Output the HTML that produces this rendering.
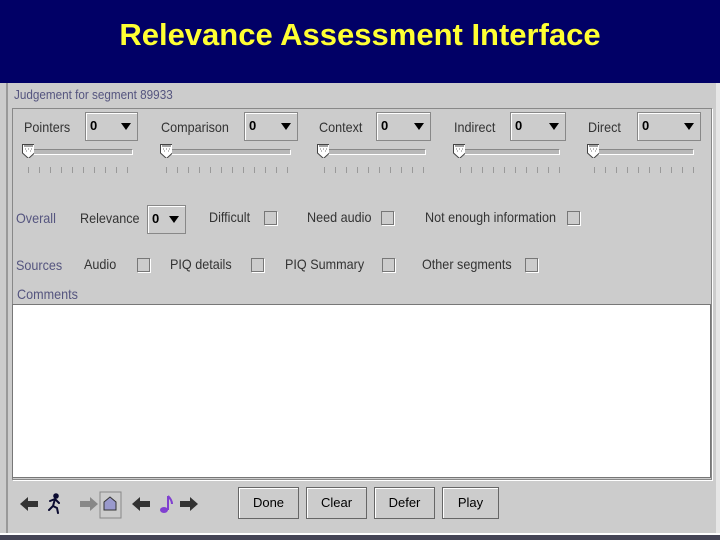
<!DOCTYPE html><html><head><style>
body{margin:0;width:720px;height:540px;background:#cccccc;position:relative;overflow:hidden;font-family:"Liberation Sans",sans-serif}
.a{position:absolute}
.hd{left:0;top:0;width:720px;height:83px;background:#010066}
.t{left:0;width:720px;top:17px;text-align:center;color:#ffff33;font-weight:bold;font-size:31px}
.l{color:#55557f;font-size:14px;transform:scaleX(.9);transform-origin:left}
.lk{color:#333;font-size:14px;transform:scaleX(.9);transform-origin:left}
.dd{height:27px;border:1px solid #888;box-shadow:inset 1px 1px #fff;background:#ccc;font-size:13px;font-weight:bold;color:#000}
.dd span{position:absolute;left:4px;top:5px}
.dd i{position:absolute;right:6px;top:10px;border-left:5px solid transparent;border-right:5px solid transparent;border-top:7px solid #000}
.tr{height:4px;background:#b8b8b8;border:1px solid #888;border-right-color:#fff;border-bottom-color:#fff}
.th{width:12px;height:14px}
.tk{height:6px;background:repeating-linear-gradient(90deg,#999 0 1px,transparent 1px 11px)}
.cb{width:11px;height:12px;border:1px solid #777;box-shadow:1px 1px #fff}
.bt{height:30px;border:1px solid #666;box-shadow:inset 1px 1px #fff;background:#ccc;font-size:13px;color:#000;text-align:center;line-height:30px}
</style></head><body>
<svg width="0" height="0" style="position:absolute"><defs><g id="th"><path d="M0.5 0.5 H12.5 V9 L6.5 14.5 L0.5 9 Z" fill="#fff" stroke="#444"/><path d="M2 2 H11" stroke="#444"/><path d="M3 5h1M6 5h1M9 5h1M4 7h1M8 7h1" stroke="#777"/></g></defs></svg>
<div class="a hd"></div><div class="a t">Relevance Assessment Interface</div>
<div class="a" style="left:6px;top:83px;width:2px;height:450px;background:#999"></div>
<div class="a" style="left:716px;top:83px;width:4px;height:457px;background:#e6e6e6"></div>
<div class="a" style="left:0;top:533px;width:720px;height:2px;background:#fff"></div>
<div class="a" style="left:0;top:535px;width:720px;height:5px;background:#445"></div>
<div class="a l" style="left:14px;top:87px;font-size:13px">Judgement for segment 89933</div>
<div class="a" style="left:12px;top:108px;width:698px;height:370px;border:1px solid #888;box-shadow:1px 1px #fff"></div>

<div class="a lk" style="left:24px;top:119px">Pointers</div>
<div class="a dd" style="left:85px;top:112px;width:51px"><span>0</span><i></i></div>
<div class="a lk" style="left:161px;top:119px">Comparison</div>
<div class="a dd" style="left:244px;top:112px;width:52px"><span>0</span><i></i></div>
<div class="a lk" style="left:319px;top:119px">Context</div>
<div class="a dd" style="left:376px;top:112px;width:53px"><span>0</span><i></i></div>
<div class="a lk" style="left:454px;top:119px">Indirect</div>
<div class="a dd" style="left:510px;top:112px;width:54px"><span>0</span><i></i></div>
<div class="a lk" style="left:588px;top:119px">Direct</div>
<div class="a dd" style="left:637px;top:112px;width:62px"><span>0</span><i></i></div>

<div class="a tr" style="left:27px;top:149px;width:104px"></div><svg class="a th" style="left:22px;top:144px" width="13" height="16"><use href="#th"/></svg><div class="a tk" style="left:28px;top:167px;width:110px"></div>
<div class="a tr" style="left:165px;top:149px;width:124px"></div><svg class="a th" style="left:160px;top:144px" width="13" height="16"><use href="#th"/></svg><div class="a tk" style="left:166px;top:167px;width:126px"></div>
<div class="a tr" style="left:322px;top:149px;width:102px"></div><svg class="a th" style="left:317px;top:144px" width="13" height="16"><use href="#th"/></svg><div class="a tk" style="left:324px;top:167px;width:110px"></div>
<div class="a tr" style="left:458px;top:149px;width:100px"></div><svg class="a th" style="left:453px;top:144px" width="13" height="16"><use href="#th"/></svg><div class="a tk" style="left:460px;top:167px;width:100px"></div>
<div class="a tr" style="left:592px;top:149px;width:100px"></div><svg class="a th" style="left:587px;top:144px" width="13" height="16"><use href="#th"/></svg><div class="a tk" style="left:594px;top:167px;width:104px"></div>

<div class="a l" style="left:16px;top:210px">Overall</div>
<div class="a lk" style="left:80px;top:210px">Relevance</div>
<div class="a dd" style="left:147px;top:205px;width:37px"><span>0</span><i></i></div>
<div class="a lk" style="left:209px;top:209px">Difficult</div><div class="a cb" style="left:264px;top:211px"></div>
<div class="a lk" style="left:307px;top:209px">Need audio</div><div class="a cb" style="left:381px;top:211px"></div>
<div class="a lk" style="left:425px;top:209px">Not enough information</div><div class="a cb" style="left:567px;top:211px"></div>

<div class="a l" style="left:16px;top:257px">Sources</div>
<div class="a lk" style="left:84px;top:256px">Audio</div><div class="a cb" style="left:137px;top:258px"></div>
<div class="a lk" style="left:170px;top:256px">PIQ details</div><div class="a cb" style="left:251px;top:258px"></div>
<div class="a lk" style="left:285px;top:256px">PIQ Summary</div><div class="a cb" style="left:382px;top:258px"></div>
<div class="a lk" style="left:422px;top:256px">Other segments</div><div class="a cb" style="left:525px;top:258px"></div>

<div class="a l" style="left:17px;top:286px">Comments</div>
<div class="a" style="left:12px;top:304px;width:697px;height:172px;background:#fff;border:1px solid #777"></div>

<svg class="a" style="left:14px;top:488px" width="190" height="32">
<path d="M6 16 L14 9 V13 H24 V19 H14 V23 Z" fill="#333"/>
<g stroke="#0a0a30" stroke-width="2" fill="none" stroke-linecap="round"><circle cx="42" cy="8" r="1.8" fill="#0a0a30"/><path d="M41 11 L39 18 L35 22 M39 18 L43 20 L44 25 M36 13 L41 11 L45 15"/></g>
<path d="M84 16 L76 9 V13 H66 V19 H76 V23 Z" fill="#888"/>
<rect x="86" y="4" width="21" height="26" fill="none" stroke="#888"/>
<path d="M90 14 L96 9 L102 14 V22 H90 Z" fill="#99c" stroke="#333" stroke-width="1"/>
<path d="M118 16 L126 9 V13 H136 V19 H126 V23 Z" fill="#333"/>
<path d="M154 8 V22" stroke="#8040d0" stroke-width="2"/><ellipse cx="150" cy="22" rx="4" ry="3" fill="#8040d0"/><path d="M154 8 Q158 12 158 16" stroke="#8040d0" fill="none" stroke-width="2"/>
<path d="M184 16 L176 9 V13 H166 V19 H176 V23 Z" fill="#333"/>
</svg>
<div class="a bt" style="left:238px;top:487px;width:59px">Done</div>
<div class="a bt" style="left:306px;top:487px;width:59px">Clear</div>
<div class="a bt" style="left:374px;top:487px;width:59px">Defer</div>
<div class="a bt" style="left:442px;top:487px;width:55px">Play</div>
</body></html>
